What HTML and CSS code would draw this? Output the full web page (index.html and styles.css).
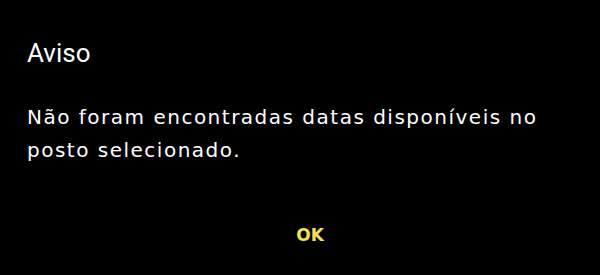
FILE: index.html
```html
<!DOCTYPE html>
<html lang="pt">
<head>
<meta charset="utf-8">
<link rel="stylesheet" href="styles.css">
</head>
<body>
<div class="dialog">
  <h1 class="title">Aviso</h1>
  <p class="content">Não foram encontradas datas disponíveis no posto selecionado.</p>
  <div class="actions">
    <button class="ok">OK</button>
  </div>
</div>
</body>
</html>
```
FILE: styles.css
```css
html, body {
  margin: 0;
  padding: 0;
  background: #000;
  width: 600px;
  height: 275px;
  overflow: hidden;
}
.dialog {
  display: flex;
  flex-direction: column;
  padding: 33px 27px 0 27px;
  color: #fff;
}
.title {
  margin: 0;
  font-family: Roboto, "Liberation Sans", sans-serif;
  font-weight: 400;
  font-size: 26px;
  line-height: 40px;
}
.content {
  margin: 28px 0 0 0;
  font-family: "DejaVu Sans", sans-serif;
  font-size: 20px;
  letter-spacing: 1.5px;
  line-height: 33px;
  width: 540px;
}
.actions {
  display: flex;
  justify-content: center;
  margin-top: 58px;
  padding-left: 20px;
}
.ok {
  background: none;
  border: none;
  padding: 0;
  font-family: "DejaVu Sans", sans-serif;
  font-weight: 600;
  font-size: 17px;
  color: #f3e34a;
}
```
